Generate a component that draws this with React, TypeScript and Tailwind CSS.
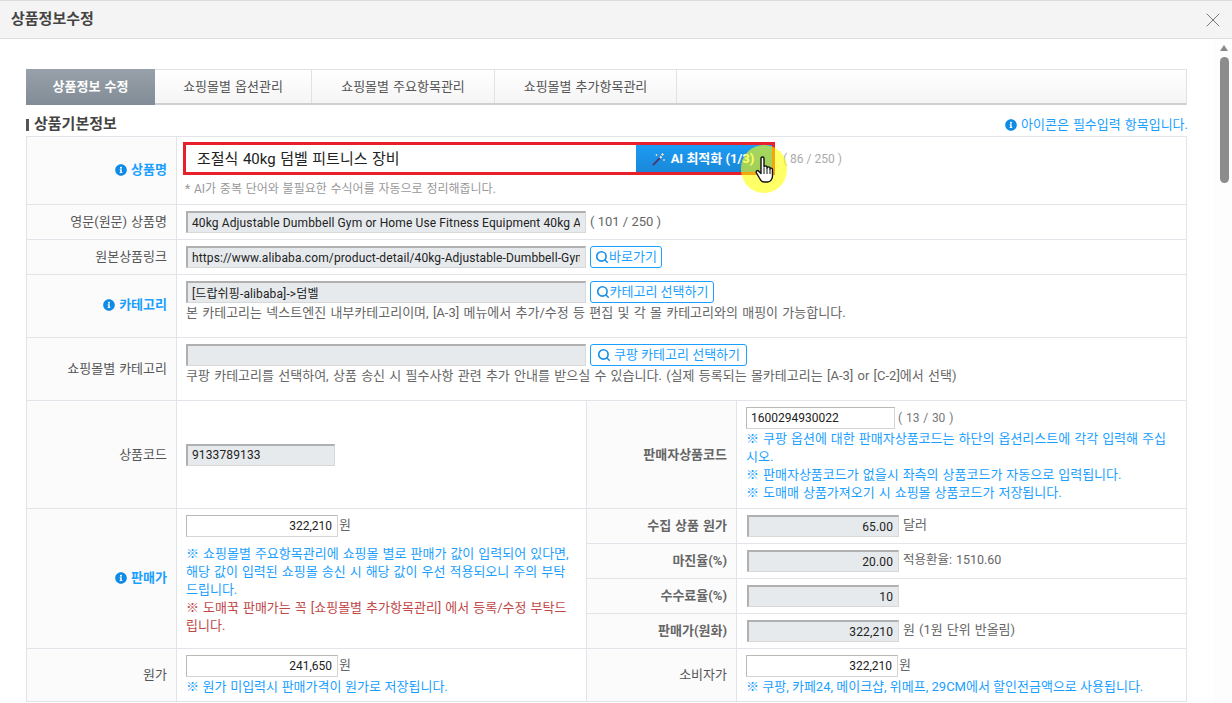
import React from "react";
import { Search, X } from "lucide-react";
import { FaInfoCircle } from "react-icons/fa";

const th = "bg-[#fbfbfc] border border-[#e3e4ea] text-right pr-[9px] font-bold text-[#666] text-[13px] align-middle";
const thn = "bg-[#fbfbfc] border border-[#e3e4ea] text-right pr-[9px] font-normal text-[#555] text-[13px] align-middle";
const tdm = "bg-white border border-[#e3e4ea] text-left pl-[9px] pr-[9px] align-middle text-[13px] text-[#666]";
const tdt = "bg-white border border-[#e3e4ea] text-left pl-[9px] pr-[9px] align-top pt-[6px] text-[13px] text-[#666]";
const ro = "h-[22px] bg-[#e7eaed] border-2 border-r border-b border-[#d8d8d8] border-t-[#b0b0b0] border-l-[#b0b0b0] pl-[4px] pr-[5px] text-[12px] tracking-[0.12px] text-[#222] outline-none";
const rw = "h-[22px] bg-white border border-[#d4d4d4] border-t-[#b8b8b8] border-l-[#b8b8b8] pl-[4px] pr-[5px] text-[12px] text-[#222] outline-none";
const note = "text-[#1a9fff] text-[13px] leading-[18px]";

function Req({ label }: { label: string }) {
  return (
    <span className="inline-flex items-center gap-[4px] text-[#1a9fff]">
      <FaInfoCircle className="text-[#0f8be6]" size={12} />
      {label}
    </span>
  );
}

function Btn({ label, cls }: { label: string; cls: string }) {
  return (
    <button className={"h-[22px] rounded-[3px] border border-[#1a9fff] bg-white text-[#1a9fff] text-[13px] inline-flex items-center justify-center whitespace-nowrap " + cls}>
      <Search size={14} strokeWidth={2.8} className="text-[#1a8fe8]" />
      {label}
    </button>
  );
}

const tabs = [
  { t: "쇼핑몰별 옵션관리", w: "w-[157px]" },
  { t: "쇼핑몰별 주요항목관리", w: "w-[183px]" },
  { t: "쇼핑몰별 추가항목관리", w: "w-[182px]" },
];

export default function App() {
  return (
    <div className="w-[1232px] h-[703px] overflow-hidden flex flex-col bg-white text-[13px] [word-spacing:0.8px]" style={{ fontFamily: 'Roboto, "Noto Sans CJK KR", sans-serif' }}>
      <header className="h-[39px] shrink-0 bg-[#f4f4f4] border-t border-t-[#dcdcdc] border-b border-b-[#dedede] flex items-center justify-between pl-[11px] pr-[7px]">
        <h1 className="text-[15px] font-bold text-[#444]">상품정보수정</h1>
        <X size={24} strokeWidth={1} className="text-[#777]" />
      </header>
      <div className="flex-1 flex min-h-0">
        <main className="w-[1213px] pl-[26px] pr-[26px] pt-[30px] overflow-hidden">
          <nav className="h-[36px] flex border border-[#e2e2e2] border-b-[#cfcfcf] border-b-2 bg-gradient-to-b from-white to-[#f5f5f5] w-[1161px]">
            <div className="w-[129px] -ml-px -mt-px h-[36px] bg-gradient-to-b from-[#98a1a9] to-[#828c96] text-white font-bold flex items-center justify-center">상품정보 수정</div>
            {tabs.map((x) => (
              <div key={x.t} className={x.w + " flex items-center justify-center text-[#555] border-r border-[#e2e2e2]"}>{x.t}</div>
            ))}
          </nav>
          <div className="h-[31px] flex items-center justify-between pt-[8px]">
            <div className="flex items-center gap-[5px] text-[15px] font-bold text-[#444]">
              <span className="w-[3px] h-[12px] bg-[#555]" />
              상품기본정보
            </div>
            <span className="inline-flex items-center gap-[4px] text-[#1a9fff] -mr-px">
              <FaInfoCircle className="text-[#0f8be6]" size={12} />
              아이콘은 필수입력 항목입니다.
            </span>
          </div>
          <table className="w-[1161px] border-collapse table-fixed">
            <colgroup>
              <col className="w-[150px]" />
              <col className="w-[410px]" />
              <col className="w-[150px]" />
              <col />
            </colgroup>
            <tbody>
              <tr className="h-[68px]">
                <th className={th}><Req label="상품명" /></th>
                <td colSpan={3} className="bg-white border border-[#e3e4ea] text-left pl-[6px] align-top pt-[5px] text-[13px] text-[#666]">
                  <div className="flex items-center gap-[8px]">
                    <div className="w-[592px] h-[33px] border-[3px] border-[#e8202c] flex">
                      <input readOnly value="조절식 40kg 덤벨 피트니스 장비" className="flex-1 min-w-0 pl-[11px] pt-[2px] text-[15px] [word-spacing:0.8px] text-[#222] outline-none bg-white" />
                      <button className="w-[136px] h-full bg-gradient-to-b from-[#1c9bf5] to-[#1a88d8] text-white font-bold flex items-center justify-center gap-[5px] text-[13px] pr-[2px] pt-[1px] whitespace-nowrap">
                        <svg width="14" height="14" viewBox="0 0 14 14">
                          <path d="M1.5 12.5 8 6" stroke="#4a3a78" strokeWidth="2" strokeLinecap="round" />
                          <path d="M8 6 9.5 4.5" stroke="#f2f2f2" strokeWidth="2" />
                          <path d="M10.5 1v3M9 2.5h3M4.5 2v2M3.5 3h2M12 7v2M11 8h2" stroke="#f4d9a8" strokeWidth="0.9" />
                        </svg>
                        AI 최적화 (1/3)
                      </button>
                    </div>
                    <span className="text-[#aaa] text-[12px] [word-spacing:0px]">( 86 / 250 )</span>
                  </div>
                  <p className="text-[12px] text-[#999] mt-[5px] ml-[-1px] pl-[3px]">* AI가 중복 단어와 불필요한 수식어를 자동으로 정리해줍니다.</p>
                </td>
              </tr>
              <tr className="h-[35px]">
                <th className={thn}>영문(원문) 상품명</th>
                <td colSpan={3} className={tdm}>
                  <div className="flex items-center gap-[4px]">
                    <input readOnly value="40kg Adjustable Dumbbell Gym or Home Use Fitness Equipment 40kg Adjustable" className={ro + " w-[400px]"} />
                    <span className="[word-spacing:0px]">( 101 / 250 )</span>
                  </div>
                </td>
              </tr>
              <tr className="h-[35px]">
                <th className={thn}>원본상품링크</th>
                <td colSpan={3} className={tdm}>
                  <div className="flex items-center gap-[4px]">
                    <input readOnly value="https://www.alibaba.com/product-detail/40kg-Adjustable-Dumbbell-Gym-or-Home" className={ro + " w-[400px]"} />
                    <Btn label="바로가기" cls="w-[72px]" />
                  </div>
                </td>
              </tr>
              <tr className="h-[63px]">
                <th className={th}><Req label="카테고리" /></th>
                <td colSpan={3} className={tdt}>
                  <div className="flex items-center gap-[4px]">
                    <input readOnly value="[드랍쉬핑-alibaba]->덤벨" className={ro + " w-[400px]"} />
                    <Btn label="카테고리 선택하기" cls="w-[124px]" />
                  </div>
                  <p className="mt-[1px] leading-[18px] [word-spacing:1.05px]">본 카테고리는 넥스트엔진 내부카테고리이며, [A-3] 메뉴에서 추가/수정 등 편집 및 각 몰 카테고리와의 매핑이 가능합니다.</p>
                </td>
              </tr>
              <tr className="h-[63px]">
                <th className={thn}>쇼핑몰별 카테고리</th>
                <td colSpan={3} className={tdt}>
                  <div className="flex items-center gap-[4px]">
                    <input readOnly value="" className={ro + " w-[400px]"} />
                    <Btn label="쿠팡 카테고리 선택하기" cls="w-[157px] gap-[3px]" />
                  </div>
                  <p className="mt-[1px] leading-[18px] [word-spacing:1.05px]">쿠팡 카테고리를 선택하여, 상품 송신 시 필수사항 관련 추가 안내를 받으실 수 있습니다. (실제 등록되는 몰카테고리는 [A-3] or [C-2]에서 선택)</p>
                </td>
              </tr>
              <tr className="h-[108px]">
                <th className={thn}>상품코드</th>
                <td className={tdm}>
                  <input readOnly value="9133789133" className={ro + " w-[149px] block"} />
                </td>
                <th className={th}>판매자상품코드</th>
                <td className={tdt}>
                  <div className="flex items-center gap-[3px]">
                    <input readOnly value="1600294930022" className={rw + " w-[149px]"} />
                    <span className="text-[#777] text-[12px]">( 13 / 30 )</span>
                  </div>
                  <p className={note + " mt-[1px]"}>※ 쿠팡 옵션에 대한 판매자상품코드는 하단의 옵션리스트에 각각 입력해 주십시오.</p>
                  <p className={note}>※ 판매자상품코드가 없을시 좌측의 상품코드가 자동으로 입력됩니다.</p>
                  <p className={note}>※ 도매매 상품가져오기 시 쇼핑몰 상품코드가 저장됩니다.</p>
                </td>
              </tr>
              <tr className="h-[35px]">
                <th rowSpan={4} className={th}><Req label="판매가" /></th>
                <td rowSpan={4} className={tdt}>
                  <div className="flex items-center gap-[1px]">
                    <input readOnly value="322,210" className={rw + " w-[152px] text-right"} />
                    <span className="-mt-[2px]">원</span>
                  </div>
                  <p className={note + " mt-[8px]"}>※ 쇼핑몰별 주요항목관리에 쇼핑몰 별로 판매가 값이 입력되어 있다면, 해당 값이 입력된 쇼핑몰 송신 시 해당 값이 우선 적용되오니 주의 부탁드립니다.</p>
                  <p className="text-[#c04848] text-[13px] leading-[18px]">※ 도매꾹 판매가는 꼭 [쇼핑몰별 추가항목관리] 에서 등록/수정 부탁드립니다.</p>
                </td>
                <th className={th}>수집 상품 원가</th>
                <td className={tdm}>
                  <div className="flex items-center gap-[4px]">
                    <input readOnly value="65.00" className={ro + " w-[152px] ml-px text-right"} />
                    <span className="-mt-[2px]">달러</span>
                  </div>
                </td>
              </tr>
              <tr className="h-[35px]">
                <th className={th}>마진율(%)</th>
                <td className={tdm}>
                  <div className="flex items-center gap-[4px]">
                    <input readOnly value="20.00" className={ro + " w-[152px] ml-px text-right"} />
                    <span className="-mt-[2px] text-[12.5px]">적용환율: 1510.60</span>
                  </div>
                </td>
              </tr>
              <tr className="h-[35px]">
                <th className={th}>수수료율(%)</th>
                <td className={tdm}>
                  <input readOnly value="10" className={ro + " w-[152px] ml-px text-right block"} />
                </td>
              </tr>
              <tr className="h-[35px]">
                <th className={th}>판매가(원화)</th>
                <td className={tdm}>
                  <div className="flex items-center gap-[4px]">
                    <input readOnly value="322,210" className={ro + " w-[152px] ml-px text-right"} />
                    <span className="-mt-[2px]">원 (1원 단위 반올림)</span>
                  </div>
                </td>
              </tr>
              <tr className="h-[53px]">
                <th className={thn}>원가</th>
                <td className={tdt}>
                  <div className="flex items-center gap-[1px]">
                    <input readOnly value="241,650" className={rw + " w-[152px] text-right"} />
                    <span className="-mt-[2px]">원</span>
                  </div>
                  <p className={note + " mt-[1px] [word-spacing:0.4px]"}>※ 원가 미입력시 판매가격이 원가로 저장됩니다.</p>
                </td>
                <th className={thn}>소비자가</th>
                <td className={tdt}>
                  <div className="flex items-center gap-[1px]">
                    <input readOnly value="322,210" className={rw + " w-[152px] text-right"} />
                    <span className="-mt-[2px]">원</span>
                  </div>
                  <p className={note + " mt-[1px] [word-spacing:0px]"}>※ 쿠팡, 카페24, 메이크샵, 위메프, 29CM에서 할인전금액으로 사용됩니다.</p>
                </td>
              </tr>
            </tbody>
          </table>
        </main>
        <aside className="w-[19px] bg-[#fdfdfd] flex flex-col items-end pr-[3px] pt-[6px]">
          <div className="w-0 h-0 border-l-[4px] border-r-[4px] border-b-[6px] border-l-transparent border-r-transparent border-b-[#888] mr-[1px]" />
          <div className="w-[9px] h-[126px] rounded-[5px] bg-[#8c8c8c] mt-[6px]" />
        </aside>
      </div>
      <div className="absolute left-[741px] top-[145px] w-[46px] h-[48px] rounded-full bg-[#ffff00]/60" />
      <svg className="absolute left-[755px] top-[156px]" width="20" height="28" viewBox="0 0 20 28">
        <path d="M6 2.5c0-2 3-2 3 0V11c0-1.5 3-1.5 3 0v1c0-1.5 3-1.5 3 0v1c0-1.3 2.5-1.3 2.5.5V20c0 3-2 6-5 6H9c-2 0-3-1-4-3l-3.5-6c-1-2 1-3 2-2L6 17.5z" fill="#fff" stroke="#111" strokeWidth="1.4" strokeLinejoin="round" />
        <path d="M9 12v6M12 12v6M15 13v5" stroke="#111" strokeWidth="1" />
      </svg>
    </div>
  );
}
